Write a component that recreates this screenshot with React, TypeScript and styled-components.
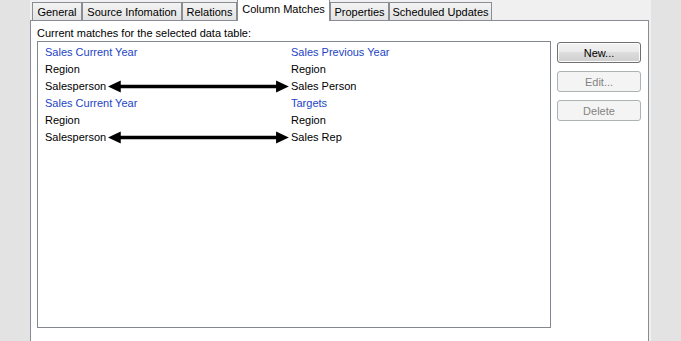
import styled, { createGlobalStyle } from "styled-components";

const GlobalStyle = createGlobalStyle`
  html, body {
    margin: 0;
    padding: 0;
    background: #e3e3e3;
    font-family: "Liberation Sans", Arial, sans-serif;
    font-size: 11px;
    color: #000;
  }
`;

const Page = styled.div`
  display: flex;
  height: 341px;
  padding-left: 30px;
  overflow: hidden;
`;

const Form = styled.div`
  width: 621px;
  height: 341px;
  background: #f0f0f0;
  display: flex;
  flex-direction: column;
`;

const TabStrip = styled.div`
  display: flex;
  align-items: flex-end;
  height: 20px;
  padding-left: 2px;
  position: relative;
  z-index: 1;
`;

const Tab = styled.div<{ $w: number; $active?: boolean }>`
  box-sizing: border-box;
  width: ${(p) => p.$w}px;
  height: ${(p) => (p.$active ? 22 : 18)}px;
  margin-bottom: ${(p) => (p.$active ? -1 : 0)}px;
  padding-bottom: ${(p) => (p.$active ? 3 : 0)}px;
  padding-top: ${(p) => (p.$active ? 0 : 1)}px;
  border: 1px solid #898c95;
  border-bottom: none;
  background: ${(p) =>
    p.$active ? "#ffffff" : "linear-gradient(#f3f3f3, #e3e3e3)"};
  display: flex;
  align-items: center;
  justify-content: center;
  white-space: nowrap;
  line-height: 13px;
`;

const Panel = styled.div`
  flex: 1;
  margin-right: 2px;
  background: #fff;
  border: 1px solid #898c95;
  border-bottom: none;
  padding: 6px 6px 0 6px;
  display: flex;
  flex-direction: column;
`;

const Label = styled.div`
  line-height: 13px;
  height: 14px;
`;

const Body = styled.div`
  display: flex;
  gap: 6px;
`;

const ListBox = styled.div`
  box-sizing: border-box;
  width: 514px;
  height: 287px;
  border: 1px solid #828790;
  padding: 2px 0 0 7px;
  display: flex;
  flex-direction: column;
`;

const Row = styled.div`
  display: flex;
  height: 17px;
  line-height: 17px;
  white-space: nowrap;
`;

const LeftCell = styled.div`
  width: 246px;
  display: flex;
  align-items: center;
`;

const Cell = styled.span<{ $group?: boolean }>`
  color: ${(p) => (p.$group ? "#1d44c4" : "#000")};
`;

const ArrowSvg = styled.svg`
  flex: 1;
  height: 13px;
  margin: 0 2px 0 2px;
`;

const Buttons = styled.div`
  display: flex;
  flex-direction: column;
  gap: 8px;
  margin-top: 1px;
`;

const Button = styled.button<{ $default?: boolean }>`
  box-sizing: border-box;
  width: 84px;
  height: 21px;
  padding: 0;
  font-family: inherit;
  font-size: 11px;
  border-radius: 3px;
  border: 1px solid ${(p) => (p.$default ? "#707070" : "#adb2b5")};
  background: ${(p) =>
    p.$default
      ? "linear-gradient(#f2f2f2 0%, #ebebeb 45%, #dddddd 50%, #cfcfcf 100%)"
      : "#f4f4f4"};
  color: ${(p) => (p.$default ? "#000" : "#838383")};
  box-shadow: inset 0 0 0 1px ${(p) => (p.$default ? "#fcfcfc" : "#f4f4f4")};
`;

function Arrow() {
  return (
    <ArrowSvg viewBox="0 0 184 13" preserveAspectRatio="none">
      <line x1="10" y1="6.5" x2="174" y2="6.5" stroke="#000" strokeWidth="3.5" />
      <polygon points="0,6.5 13,0.5 13,12.5" fill="#000" />
      <polygon points="184,6.5 171,0.5 171,12.5" fill="#000" />
    </ArrowSvg>
  );
}

type Match = { left: string; right: string; group?: boolean; linked?: boolean };

const matches: Match[] = [
  { left: "Sales Current Year", right: "Sales Previous Year", group: true },
  { left: "Region", right: "Region" },
  { left: "Salesperson", right: "Sales Person", linked: true },
  { left: "Sales Current Year", right: "Targets", group: true },
  { left: "Region", right: "Region" },
  { left: "Salesperson", right: "Sales Rep", linked: true },
];

const tabs = [
  { name: "General", w: 50 },
  { name: "Source Infomation", w: 100 },
  { name: "Relations", w: 55 },
  { name: "Column Matches", w: 93, active: true },
  { name: "Properties", w: 59 },
  { name: "Scheduled Updates", w: 103 },
];

export default function App() {
  return (
    <>
      <GlobalStyle />
      <Page>
        <Form>
          <TabStrip>
            {tabs.map((t) => (
              <Tab key={t.name} $w={t.w} $active={t.active}>
                {t.name}
              </Tab>
            ))}
          </TabStrip>
          <Panel>
            <Label>Current matches for the selected data table:</Label>
            <Body>
              <ListBox>
                {matches.map((m, i) => (
                  <Row key={i}>
                    <LeftCell>
                      <Cell $group={m.group}>{m.left}</Cell>
                      {m.linked && <Arrow />}
                    </LeftCell>
                    <Cell $group={m.group}>{m.right}</Cell>
                  </Row>
                ))}
              </ListBox>
              <Buttons>
                <Button $default>New...</Button>
                <Button disabled>Edit...</Button>
                <Button disabled>Delete</Button>
              </Buttons>
            </Body>
          </Panel>
        </Form>
      </Page>
    </>
  );
}
